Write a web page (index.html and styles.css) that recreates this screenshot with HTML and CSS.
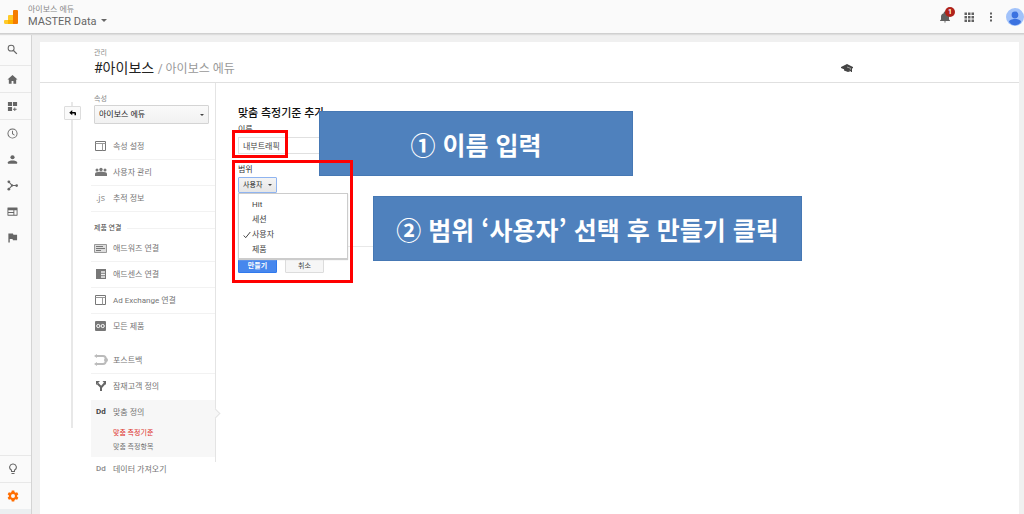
FILE: index.html
```html
<!DOCTYPE html>
<html lang="ko">
<head>
<meta charset="utf-8">
<title>맞춤 측정기준 추가</title>
<link rel="stylesheet" href="styles.css">
</head>
<body>
<header class="topbar">
  <svg class="logo" viewBox="0 0 14 14"><path fill="#ffca28" d="M0 11a1 1 0 0 1 1-1h3V6a1 1 0 0 1 1-1h4v9H1.500A1.500 1.500 0 0 1 0 12.500z"/><path fill="#ffb300" d="M4 10h5v4H4z"/><path fill="#f57c00" d="M9 1a1 1 0 0 1 1-1h3a1 1 0 0 1 1 1v12a1 1 0 0 1-1 1H9z"/></svg>
  <div class="account">
    <span class="account-name">아이보스 에듀</span>
    <button class="view-picker" type="button">MASTER Data<span class="caret"></span></button>
  </div>
  <div class="tools">
    <button class="tool bell" type="button" aria-label="알림"><svg viewBox="0 0 24 24"><path d="M12 23a2 2 0 0 0 2-2h-4a2 2 0 0 0 2 2zm8-6v-6c0-3.500-2-6-5.500-6.700V3.500a2.500 2.500 0 0 0-5 0v.8C6 5 4 7.500 4 11v6l-2 2v1h20v-1z"/></svg><span class="badge">1</span></button>
    <button class="tool" type="button" aria-label="앱"><svg viewBox="0 0 24 24"><path d="M3 3h5v5H3zm7 0h5v5h-5zm7 0h5v5h-5zM3 10h5v5H3zm7 0h5v5h-5zm7 0h5v5h-5zM3 17h5v5H3zm7 0h5v5h-5zm7 0h5v5h-5z"/></svg></button>
    <button class="tool" type="button" aria-label="더보기"><svg viewBox="0 0 24 24"><path d="M10 3h4v4h-4zm0 7h4v4h-4zm0 7h4v4h-4z"/></svg></button>
    <button class="avatar" type="button" aria-label="계정"><svg viewBox="0 0 18 18"><circle cx="9" cy="9" r="9" fill="#a1c2fa"/><circle cx="9" cy="7" r="3.400" fill="#3b72e0"/><path fill="#3b72e0" d="M3 14c0-2 3-3 6-3s6 1 6 3c-1.500 2-3.500 3.300-6 3.300S4.500 16 3 14z"/></svg></button>
  </div>
</header>
<div class="shell">
  <nav class="rail" aria-label="기본 메뉴">
    <a class="rail-item search" href="#" aria-label="검색"><svg viewBox="0 0 24 24"><circle cx="9" cy="9" r="6.500" fill="none" stroke="#666" stroke-width="2.200"/><path d="M13.500 13.500l8 8" stroke="#666" stroke-width="2.800"/></svg></a>
    <a class="rail-item line" href="#" aria-label="홈"><svg viewBox="0 0 24 24"><path d="M10 21v-6h4v6h6v-9h3L12 2 1 12h3v9z"/></svg></a>
    <a class="rail-item top" href="#" aria-label="맞춤설정"><svg viewBox="0 0 24 24"><path d="M2 2h9v9H2zm11 0h9v9h-9zM2 13h9v9H2zm14 1h2v3h3v2h-3v3h-2v-3h-3v-2h3z"/></svg></a>
    <a class="rail-item top" href="#" aria-label="실시간"><svg viewBox="0 0 24 24"><path d="M12 1a11 11 0 1 0 0 22 11 11 0 0 0 0-22zm0 20a9 9 0 1 1 0-18 9 9 0 0 1 0 18zM11 6h2v6l4 3-1 1.500-5-3.500z"/></svg></a>
    <a class="rail-item" href="#" aria-label="잠재고객"><svg viewBox="0 0 24 24"><circle cx="12" cy="7" r="4.500"/><path d="M2 21v-3c0-3 6-4 10-4s10 1 10 4v3z"/></svg></a>
    <a class="rail-item" href="#" aria-label="획득"><svg viewBox="0 0 24 24"><circle cx="4" cy="4" r="3"/><circle cx="4" cy="20" r="3"/><circle cx="21" cy="12" r="3"/><circle cx="11" cy="12" r="2.500"/><path d="M4 4l7 8-7 8M11 12h9" fill="none" stroke="#666" stroke-width="2.400"/></svg></a>
    <a class="rail-item" href="#" aria-label="행동"><svg viewBox="0 0 24 24"><path fill-rule="evenodd" d="M2 3h20a1 1 0 0 1 1 1v16a1 1 0 0 1-1 1H2a1 1 0 0 1-1-1V4a1 1 0 0 1 1-1zm1 6v4h11V9zm13 0v10h5V9zM3 15v4h11v-4z"/></svg></a>
    <a class="rail-item" href="#" aria-label="전환"><svg viewBox="0 0 24 24"><path d="M3 3h10l1 3h8v12h-9l-1-3H6v8H3z"/></svg></a>
    <a class="rail-item line low" href="#" aria-label="탐색"><svg viewBox="0 0 24 24"><path d="M9 20h6v2H9zM12 1a7.500 7.500 0 0 0-4 14v3h8v-3a7.500 7.500 0 0 0-4-14zm2 12.500V16h-4v-2.500a5.500 5.500 0 1 1 4 0z"/></svg></a>
    <a class="rail-item line active" href="#" aria-label="관리"><svg viewBox="0 0 24 24"><path fill-rule="evenodd" d="M9.500 1h5l.6 3.200 2 1.100 3.100-1 2.500 4.300-2.500 2.200v2.400l2.500 2.200-2.500 4.300-3.100-1-2 1.100-.6 3.200h-5l-.6-3.200-2-1.100-3.100 1-2.500-4.300 2.500-2.200v-2.400L1.300 8.600l2.500-4.300 3.100 1 2-1.100zM12 8a4 4 0 1 0 0 8 4 4 0 0 0 0-8z"/></svg></a>
    <div class="rail-foot"></div>
  </nav>
  <main class="card">
    <header class="card-head">
      <div>
        <div class="crumb">관리</div>
        <h1 class="heading">#아이보스 <span>/ 아이보스 에듀</span></h1>
      </div>
      <svg class="cap" viewBox="0 0 12 10"><path fill="#444" d="M0 4l6-3 6 3v1L7 8 0 5zM3 6l4 2 3-1.500V8L7 9 3 7.500zM10 5h1v4h-1z"/><path stroke="#ccc" stroke-width=".7" d="M6 4l4 1.500"/></svg>
    </header>
    <div class="card-body">
      <div class="back-col"><button class="back" type="button" aria-label="뒤로"><svg viewBox="0 0 10 8"><path d="M0 3.500L4 0v2.500h3.500Q9 2.500 9 4v3H7V4.500H4V7z"/></svg></button></div>
      <div class="side">
        <label class="side-label" for="property">속성</label>
        <div class="select-wrap wide"><select id="property"><option>아이보스 에듀</option></select><span class="caret dark"></span></div>
        <nav class="menu" aria-label="속성 메뉴">
          <a class="item" href="#"><svg class="ico" viewBox="0 0 14 12"><path fill="none" stroke="#777" d="M1.500 1.500h10v9h-10z"/><path fill="none" stroke="#999" d="M1.500 3.500h10M8.500 4v6.500"/></svg>속성 설정</a>
          <a class="item" href="#"><svg class="ico" viewBox="0 0 14 12"><g fill="#777"><circle cx="3" cy="4" r="1.500"/><circle cx="7" cy="3.500" r="1.700"/><circle cx="11" cy="4" r="1.500"/><path d="M1 10V8q0-2 3-2l3-.5 3 .5q3 0 3 2v2z"/></g></svg>사용자 관리</a>
          <a class="item" href="#"><span class="ico js">.js</span>추적 정보</a>
          <h2 class="group">제품 연결</h2>
          <a class="item" href="#"><svg class="ico" viewBox="0 0 14 12"><path fill="#ddd" stroke="#999" d="M.5 2.500h12v8H.5z"/><path stroke="#777" d="M2 4.500h7M2 6.500h9M2 8.500h5"/></svg>애드워즈 연결</a>
          <a class="item" href="#"><svg class="ico" viewBox="0 0 14 12"><path fill="#777" d="M2 1h10v10H2z"/><path stroke="#eee" stroke-width="1.400" d="M7 4h4M7 6.500h4M7 9h4"/></svg>애드센스 연결</a>
          <a class="item" href="#"><svg class="ico" viewBox="0 0 14 12"><path fill="none" stroke="#777" d="M1.500 1.500h10v9h-10z"/><path fill="none" stroke="#999" d="M1.500 3.500h10M8.500 4v6.500"/></svg>Ad Exchange 연결</a>
          <a class="item plain" href="#"><svg class="ico" viewBox="0 0 14 12"><rect x="1" y="1" width="11" height="10" rx="1" fill="#777"/><g fill="none" stroke="#fff"><circle cx="4.300" cy="6" r="1.600"/><circle cx="8.700" cy="6" r="1.600"/></g></svg>모든 제품</a>
          <div class="gap"></div>
          <a class="item" href="#"><svg class="ico" viewBox="0 0 14 12"><path fill="none" stroke="#bbb" stroke-width="2" d="M2 2h7q3 0 3 4t-3 4H2"/><path fill="#bbb" d="M0 2l3-2v4zm0 8l3-2v4z"/><circle cx="12" cy="6" r="2" fill="#bbb"/></svg>포스트백</a>
          <a class="item plain" href="#"><svg class="ico" viewBox="0 0 14 12"><path fill="none" stroke="#666" stroke-width="2" d="M7 11V7L3.500 3.500M7 7.500L11 3"/><path fill="#666" d="M2 1h4L2 5zm6.500 0H12v4z"/></svg>잠재고객 정의</a>
          <div class="current">
            <a class="item plain" href="#"><span class="ico dd">Dd</span>맞춤 정의</a>
            <a class="sub on" href="#">맞춤 측정기준</a>
            <a class="sub" href="#">맞춤 측정항목</a>
          </div>
          <a class="item plain" href="#"><span class="ico dd pale">Dd</span>데이터 가져오기</a>
        </nav>
      </div>
      <form class="form">
        <h2 class="form-title">맞춤 측정기준 추가</h2>
        <label class="field-label" for="name">이름</label>
        <input class="name" id="name" type="text" value="내부트래픽">
        <label class="field-label scope-label" for="scope">범위</label>
        <div class="select-wrap scope"><select id="scope"><option>Hit</option><option>세션</option><option selected>사용자</option><option>제품</option></select><span class="caret dark"></span>
          <ul class="popup">
            <li>Hit</li><li>세션</li>
            <li><svg class="tick" viewBox="0 0 8 8"><path fill="none" stroke="#444" d="M.7 4.500l2 2.200L7.300 1"/></svg>사용자</li>
            <li>제품</li>
          </ul>
        </div>
        <hr class="rule">
        <div class="actions">
          <button class="btn primary" type="submit">만들기</button>
          <button class="btn" type="button">취소</button>
        </div>
      </form>
    </div>
    <div class="note note-one">① 이름 입력</div>
    <div class="note note-two">② 범위 ‘사용자’ 선택 후 만들기 클릭</div>
    <div class="mark mark-one"></div>
    <div class="mark mark-two"></div>
  </main>
</div>
</body>
</html>
```

FILE: styles.css
```css
* { box-sizing: border-box; }
body {
  margin: 0;
  min-height: 100vh;
  display: flex;
  flex-direction: column;
  background: #f0f0f0;
  color: #444;
  font: 8px/12px Roboto, "Noto Sans CJK KR", sans-serif;
}
h1, h2, ul { margin: 0; padding: 0; font-weight: 400; }
a { color: inherit; text-decoration: none; }
button, input, select { font: inherit; color: inherit; margin: 0; }
svg { display: block; }

.caret {
  display: inline-block;
  border: 3px solid transparent;
  border-top-color: #666;
  border-bottom: 0;
}

.topbar {
  display: flex;
  align-items: center;
  height: 34px;
  padding-left: 4px;
  background: #fafafa;
  border-bottom: 1px solid #d0d0d0;
  box-shadow: 0 1px 1px #ddd;
  position: relative;
}
.logo { width: 14px; height: 14px; }
.account { margin-left: 10px; padding-top: 1px; }
.account-name { display: block; line-height: 10px; color: #888; }
.view-picker {
  display: flex;
  align-items: center;
  gap: 4px;
  padding: 0;
  border: 0;
  background: none;
  font-size: 11px;
  line-height: 14px;
  color: #666;
}
.view-picker .caret { margin-bottom: 3px; }
.tools { display: flex; align-items: center; gap: 10px; margin-left: auto; }
.tool { position: relative; padding: 0; border: 0; background: none; }
.tool svg { width: 12px; height: 12px; fill: #616161; }
.bell { margin-right: 2px; }
.badge {
  position: absolute;
  left: 6px;
  top: -4px;
  width: 10px;
  height: 10px;
  border-radius: 50%;
  background: #b0221a;
  color: #fff;
  font-size: 7px;
  font-weight: 700;
  line-height: 10px;
  text-align: center;
}
.avatar { margin-left: -1px; padding: 0; border: 0; background: none; }
.avatar svg { width: 18px; height: 18px; }

.shell { flex: 1; display: flex; }
.rail {
  display: flex;
  flex-direction: column;
  width: 32px;
  background: #fafafa;
  border-right: 1px solid #d4d4d4;
}
.rail-item {
  display: flex;
  align-items: center;
  height: 26px;
  padding-left: 7px;
}
.rail-item svg { width: 11px; height: 11px; fill: #666; }
.rail-item.search { height: 31px; }
.rail-item.line, .rail-item.top { border-top: 1px solid #e8e8e8; }
.rail-item.line { height: 27px; }
.rail-item.top { height: 27px; }
.rail-item.low { margin-top: auto; }
.rail-item.low svg, .rail-item.active svg { width: 12px; height: 12px; }
.rail-item.active svg { fill: #ff6d00; }
.rail-foot { height: 5px; background: #eceff1; }

.card {
  position: relative;
  flex: 1;
  margin: 8px 5px 0 8px;
  background: #fff;
}
.card-head {
  display: flex;
  justify-content: space-between;
  align-items: center;
  height: 41px;
  padding: 3px 166px 0 54px;
  border-bottom: 1px solid #e0e0e0;
}
.crumb { font-size: 7px; line-height: 10px; color: #888; }
.heading { font-size: 14px; line-height: 20px; color: #222; }
.heading span { font-size: 12px; color: #999; }
.cap { width: 12px; height: 10px; margin-top: 8px; }

.card-body { display: flex; align-items: flex-start; }
.back-col {
  width: 17px;
  height: 326px;
  margin: 19px 10px 0 24px;
  background: linear-gradient(#e8e8e8, #e8e8e8) 7px 0 / 2px 100% no-repeat;
}
.back {
  display: flex;
  align-items: center;
  justify-content: center;
  width: 17px;
  height: 14px;
  margin-top: 4px;
  padding: 0;
  border: 1px solid #ddd;
  border-radius: 1px;
  background: #fafafa;
}
.back svg { width: 8px; height: 6px; }

.side {
  width: 125px;
  padding-top: 10px;
  border-right: 1px solid #e4e4e4;
  height: 379px;
}
.side-label { display: block; margin-left: 3px; font-size: 7px; color: #888; }
.select-wrap { position: relative; display: flex; align-items: center; }
.select-wrap select {
  appearance: none;
  width: 100%;
  border: 1px solid #d4d4d4;
  border-radius: 1px;
  background: linear-gradient(#fafafa, #f1f1f1);
  padding: 0 4px;
  outline: 0;
}
.select-wrap .caret { position: absolute; right: 5px; border-width: 2px; border-bottom: 0; }
.select-wrap .dark { border-top-color: #444; }
.wide { margin: 0 6px 0 3px; }
.wide select { height: 19px; color: #222; }

.menu { padding-top: 10px; }
.item {
  display: flex;
  align-items: center;
  gap: 5px;
  height: 26px;
  padding-left: 3px;
  border-bottom: 1px solid #f2f2f2;
  color: #757575;
}
.plain { border-color: transparent; }
.ico { flex: none; width: 14px; height: 12px; margin-bottom: 1px; }
.js { font: 9px/11px "Open Sans", sans-serif; padding-left: 2px; color: #888; }
.dd { font: 700 8px/12px Roboto, sans-serif; padding-left: 2px; color: #444; }
.pale { color: #888; font-weight: 500; }
.group {
  display: flex;
  align-items: center;
  gap: 5px;
  height: 24px;
  padding: 8px 0 0 3px;
  font-size: 7px;
  color: #444;
}
.group::after { content: ""; flex: 1; border-top: 1px solid #f2f2f2; }
.gap { height: 8px; }
.current { position: relative; height: 57px; background: #f7f7f7; }
.current::after {
  content: "";
  position: absolute;
  right: -4px;
  top: 10px;
  width: 6px;
  height: 6px;
  background: #f7f7f7;
  border: solid #e4e4e4;
  border-width: 1px 1px 0 0;
  transform: rotate(45deg);
}
.sub { display: block; padding-left: 22px; font-size: 7px; line-height: 14px; color: #757575; }
.on { color: #dd2c1e; }

.form { flex: 1; max-width: 400px; padding: 22px 0 0 22px; }
.form-title { font-size: 11px; line-height: 18px; font-weight: 500; color: #111; }
.field-label { display: block; line-height: 14px; color: #333; }
.name {
  display: block;
  width: 100%;
  height: 17px;
  padding: 0 4px;
  border: 1px solid #e0e0e0;
  background: #fff;
}
.scope-label { margin-top: 9px; }
.scope { width: 39px; }
.scope select {
  height: 16px;
  padding: 0 4px;
  border-color: #8fb4f0;
  background: linear-gradient(#f4f4f4, #e6e6e6);
  font-size: 7px;
  color: #222;
}
.popup {
  position: absolute;
  left: 0;
  top: 16px;
  width: 110px;
  padding: 3px 0 1px;
  border: 1px solid #ccc;
  box-shadow: 0 1px 1px #ccc;
  background: #fff;
  list-style: none;
  z-index: 1;
}
.popup li { position: relative; padding-left: 13px; line-height: 15px; color: #444; }
.tick { position: absolute; left: 4px; top: 4px; width: 8px; height: 8px; }
.rule { margin: 53px 0 11px; border: 0; border-top: 1px solid #e8e8e8; }
.actions { display: flex; gap: 8px; }
.btn {
  width: 39px;
  height: 15px;
  padding: 0;
  border: 1px solid #dcdcdc;
  border-radius: 1px;
  background: #f6f6f6;
  font-size: 7px;
  line-height: 12px;
}
.primary { background: #4787ed; border-color: #3079ed; color: #fff; font-weight: 700; }

.note {
  position: absolute;
  z-index: 2;
  display: flex;
  align-items: center;
  justify-content: center;
  height: 65px;
  background: #4f81bd;
  border: 1px solid #4678b4;
  color: #fff;
  font: 700 25px/36px "Noto Sans CJK KR", sans-serif;
  white-space: nowrap;
}
.note-one { left: 279px; top: 69px; width: 314px; }
.note-two { left: 333px; top: 154px; width: 429px; }
.mark { position: absolute; z-index: 3; border: 3px solid #f00; }
.mark-one { left: 192px; top: 88px; width: 56px; height: 28px; }
.mark-two { left: 192px; top: 118px; width: 121px; height: 123px; }
```
